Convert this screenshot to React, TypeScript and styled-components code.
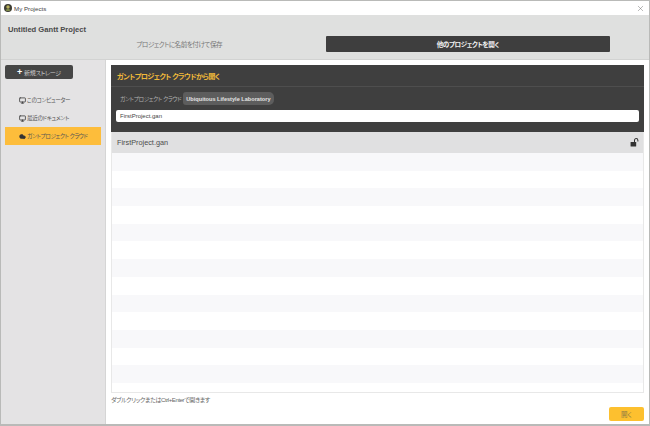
import React from 'react'
import styled, { createGlobalStyle } from 'styled-components'
import { Cloud, Monitor, X } from 'lucide-react'

const GlobalStyle = createGlobalStyle`
    html, body {
        margin: 0;
        padding: 0;
        height: 100%;
        overflow: hidden;
    }
    body {
        font-family: "Liberation Sans", "Noto Sans CJK JP", sans-serif;
        font-feature-settings: "palt";
    }
`

const Window = styled.div`
    box-sizing: border-box;
    width: 650px;
    height: 426px;
    display: flex;
    flex-direction: column;
    border: 1px solid #b9bab8;
    border-bottom-width: 2px;
    background: #fff;
`

const TitleBar = styled.div`
    height: 14px;
    flex: none;
    display: flex;
    align-items: center;
    padding: 0 4px 0 3px;
    color: #444;
    font-size: 6.2px;
    gap: 2px;
`

const AppIcon = styled.svg`
    width: 8px;
    height: 8px;
    flex: none;
`

const CloseButton = styled.span`
    margin-left: auto;
    display: flex;
    color: #666;
`

const Header = styled.header`
    height: 45px;
    flex: none;
    box-sizing: border-box;
    background: #dfe0df;
    border-bottom: 1px solid #d2d3d2;
    padding: 9px 0 0 7px;
`

const ProjectTitle = styled.div`
    font-size: 7.6px;
    font-weight: bold;
    color: #4a4a4a;
    line-height: 11px;
`

const Tabs = styled.div`
    display: flex;
    gap: 4px;
    margin-top: 1px;
    padding: 0 39px 0 29px;
`

const Tab = styled.div<{ $active?: boolean }>`
    flex: 1;
    height: 16px;
    display: flex;
    align-items: center;
    justify-content: center;
    font-size: 6.6px;
    letter-spacing: -0.5px;
    border-radius: 1px;
    color: ${({ $active }) => ($active ? '#f1f1f1' : '#777')};
    background: ${({ $active }) => ($active ? '#3e3e3e' : 'transparent')};
    font-weight: ${({ $active }) => ($active ? 'bold' : 'normal')};
`

const Body = styled.div`
    flex: 1;
    min-height: 0;
    display: flex;
`

const Sidebar = styled.aside`
    width: 105px;
    flex: none;
    box-sizing: border-box;
    background: #e4e3e4;
    border-right: 1px solid #d5d5d5;
    padding: 5px 4px 0;
    display: flex;
    flex-direction: column;
`

const NewStorageButton = styled.div`
    width: 68px;
    height: 14px;
    display: flex;
    align-items: center;
    justify-content: center;
    gap: 2px;
    background: #464646;
    border-radius: 2px;
    color: #c9c9c9;
    font-size: 6px;
    letter-spacing: -0.3px;
    margin-bottom: 12px;
`

const Plus = styled.span`
    color: #fff;
    font-size: 9px;
    font-weight: bold;
    line-height: 1;
`

const StorageItem = styled.div<{ $active?: boolean }>`
    height: 18px;
    display: flex;
    align-items: center;
    gap: 1px;
    padding-left: 14px;
    font-size: 5.6px;
    letter-spacing: -0.35px;
    white-space: nowrap;
    color: #555;
    background: ${({ $active }) => ($active ? '#fdbd3b' : 'transparent')};
    svg {
        color: #333;
        flex: none;
    }
`

const Main = styled.main`
    flex: 1;
    min-width: 0;
    display: flex;
    flex-direction: column;
    padding: 5px 5px 0 5px;
`

const OpenPanel = styled.section`
    background: #3f3f3f;
    height: 67px;
    flex: none;
    display: flex;
    flex-direction: column;
`

const PanelTitle = styled.div`
    height: 22px;
    flex: none;
    box-sizing: border-box;
    display: flex;
    align-items: center;
    padding-left: 6px;
    color: #f0b93a;
    font-size: 7.2px;
    letter-spacing: -0.6px;
    font-weight: bold;
    border-bottom: 1px solid #4e4e4e;
`

const Breadcrumbs = styled.div`
    display: flex;
    align-items: center;
    height: 13px;
    margin-top: 5px;
    padding-left: 9px;
    font-size: 5.6px;
    letter-spacing: -0.3px;
    color: #b0b0b0;
    gap: 2px;
`

const Crumb = styled.span`
    background: #5d5d5d;
    color: #e4e4e4;
    height: 13px;
    display: flex;
    align-items: center;
    padding: 0 3px;
    font-size: 5.6px;
    letter-spacing: 0;
    font-weight: bold;
    border-radius: 3px 5px 5px 3px;
`

const NameInput = styled.div`
    height: 12px;
    margin: 5px 5px 0;
    background: #fff;
    border-radius: 2px;
    display: flex;
    align-items: center;
    padding-left: 4px;
    font-size: 6px;
    color: #444;
`

const FileList = styled.section`
    height: 261px;
    flex: none;
    display: flex;
    flex-direction: column;
    border: 1px solid #e8e8e8;
    border-top: none;
    box-sizing: border-box;
`

const FileRow = styled.div`
    height: 21px;
    flex: none;
    display: flex;
    align-items: center;
    justify-content: space-between;
    padding: 0 4px 0 5px;
    background: #e0e0e1;
    color: #4c4c4c;
    font-size: 7.3px;
`

const LockIcon = styled.svg`
    width: 9px;
    height: 9px;
`

const Stripes = styled.div`
    flex: 1;
    min-height: 0;
    display: flex;
    flex-direction: column;
`

const Stripe = styled.div<{ $odd: boolean }>`
    height: 17.7px;
    flex: none;
    background: ${({ $odd }) => ($odd ? '#f8f8fa' : '#ffffff')};
`

const Footer = styled.div`
    flex: 1;
    min-height: 0;
    display: flex;
    flex-direction: column;
`

const Hint = styled.div`
    font-size: 6px;
    letter-spacing: -0.4px;
    line-height: 8px;
    margin-top: 3px;
    color: #666;
`

const CloseAction = styled.div`
    align-self: flex-end;
    width: 35px;
    height: 14px;
    margin-top: 3px;
    display: flex;
    align-items: center;
    justify-content: center;
    background: #fdc02f;
    border-radius: 2px;
    color: #8a7a45;
    font-size: 6.5px;
`

const App: React.FC = () => {
    const stripes = Array.from({ length: 13 }, (_, i) => i % 2 === 0)

    return (
        <>
            <GlobalStyle />
            <Window>
                <TitleBar>
                    <AppIcon viewBox="0 0 16 16">
                        <circle cx="8" cy="8" r="8" fill="#3d3d33" />
                        <circle cx="8" cy="6" r="3.4" fill="#b9b25c" />
                        <path d="M3 12c2-3 8-3 10 0l-2 2H5z" fill="#7d8a4a" />
                    </AppIcon>
                    My Projects
                    <CloseButton>
                        <X size={9} strokeWidth={1.2} />
                    </CloseButton>
                </TitleBar>
                <Header>
                    <ProjectTitle>Untitled Gantt Project</ProjectTitle>
                    <Tabs>
                        <Tab>プロジェクトに名前を付けて保存</Tab>
                        <Tab $active>他のプロジェクトを開く</Tab>
                    </Tabs>
                </Header>
                <Body>
                    <Sidebar>
                        <NewStorageButton>
                            <Plus>+</Plus>
                            新規ストレージ
                        </NewStorageButton>
                        <StorageItem>
                            <Monitor size={7} strokeWidth={2.6} />
                            このコンピューター
                        </StorageItem>
                        <StorageItem>
                            <Monitor size={7} strokeWidth={2.6} />
                            最近のドキュメント
                        </StorageItem>
                        <StorageItem $active>
                            <Cloud size={7} fill="#333" />
                            ガントプロジェクト クラウド
                        </StorageItem>
                    </Sidebar>
                    <Main>
                        <OpenPanel>
                            <PanelTitle>ガントプロジェクト クラウドから開く</PanelTitle>
                            <Breadcrumbs>
                                ガントプロジェクト クラウド
                                <Crumb>Ubiquitous Lifestyle Laboratory</Crumb>
                            </Breadcrumbs>
                            <NameInput>FirstProject.gan</NameInput>
                        </OpenPanel>
                        <FileList>
                            <FileRow>
                                FirstProject.gan
                                <LockIcon viewBox="0 0 16 16">
                                    <rect x="1" y="7" width="10" height="8" rx="1" fill="#333" />
                                    <path d="M8 7V4a3 3 0 0 1 6 0v2" fill="none" stroke="#333" strokeWidth="1.8" />
                                </LockIcon>
                            </FileRow>
                            <Stripes>
                                {stripes.map((odd, i) => (
                                    <Stripe key={i} $odd={odd} />
                                ))}
                            </Stripes>
                        </FileList>
                        <Footer>
                            <Hint>ダブルクリックまたはCtrl+Enterで開きます</Hint>
                            <CloseAction>開く</CloseAction>
                        </Footer>
                    </Main>
                </Body>
            </Window>
        </>
    )
}

export default App
